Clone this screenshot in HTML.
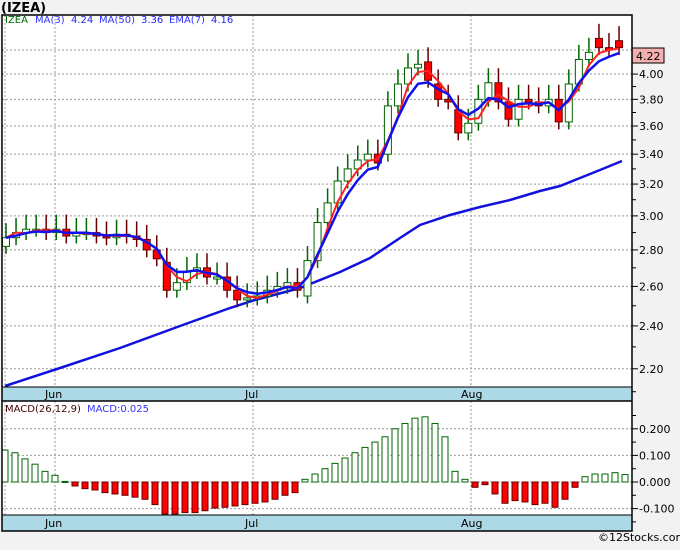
<!DOCTYPE html><html><head><style>
body{margin:0;width:680px;height:546px;background:#f2f2f2;overflow:hidden;font-family:"DejaVu Sans","Liberation Sans",sans-serif}
svg text{font-family:"DejaVu Sans","Liberation Sans",sans-serif;font-size:11px}
</style></head><body>
<svg id="s" width="680" height="546" xmlns="http://www.w3.org/2000/svg">
<rect x="2" y="15" width="630" height="516" fill="#fff"/>
<text x="1" y="12" font-weight="bold" font-size="13" style="font-size:13px">(IZEA)</text>
<rect x="2" y="387" width="630" height="14" fill="#add8e6"/>
<rect x="2" y="515" width="630" height="16" fill="#add8e6"/>
<g id="g"></g>
<rect x="2" y="15" width="630" height="516" fill="none" stroke="#000" stroke-width="1.5"/>
<line x1="2" y1="387" x2="632" y2="387" stroke="#000"/>
<line x1="2" y1="401" x2="632" y2="401" stroke="#000" stroke-width="1.5"/>
<line x1="2" y1="515" x2="632" y2="515" stroke="#000"/>
<text x="45" y="398">Jun</text><text x="245" y="398">Jul</text><text x="461" y="398">Aug</text>
<text x="45" y="527">Jun</text><text x="245" y="527">Jul</text><text x="461" y="527">Aug</text>
<text x="5" y="23" style="font-size:10px" fill="#060"><tspan>IZEA</tspan><tspan fill="#33f" x="35">MA(3)</tspan><tspan fill="#22e" x="71">4.24</tspan><tspan fill="#33f" x="99">MA(50)</tspan><tspan fill="#22e" x="141">3.36</tspan><tspan fill="#33f" x="169">EMA(7)</tspan><tspan fill="#22e" x="211">4.16</tspan></text>
<text x="5" y="412" style="font-size:10px" fill="#400"><tspan>MACD(26,12,9)</tspan><tspan fill="#33f" x="87">MACD:0.025</tspan></text>
<text x="598" y="541" style="font-size:11px">©12Stocks.com</text>
</svg>
<script>
var g=document.getElementById('g'),h='';
function Y(p){return 757.5-493*Math.log(p)}
function M(v){return 482-v*266}
[4.2,4,3.8,3.6,3.4,3.2,3,2.8,2.6,2.4,2.2].forEach(function(p){var y=Y(p);h+='<line x1="2" x2="632" y1="'+y+'" y2="'+y+'" stroke="#999" stroke-dasharray="2,2"/><line x1="632" x2="638" y1="'+y+'" y2="'+y+'" stroke="#000"/>';if(p!=4.2)h+='<text x="639" y="'+(y+4)+'">'+p.toFixed(2)+'</text>';});
[4.1,3.9,3.7,3.5,3.3,3.1,2.9,2.7,2.5,2.3,2.1].forEach(function(p){var y=Y(p);h+='<line x1="632" x2="636" y1="'+y+'" y2="'+y+'" stroke="#000"/>'});
[[0.2,'0.200'],[0.1,'0.100'],[0,'0.000'],[-0.1,'-0.100']].forEach(function(a){var y=M(a[0]);h+='<line x1="2" x2="632" y1="'+y+'" y2="'+y+'" stroke="#999" stroke-dasharray="2,2"/><line x1="632" x2="638" y1="'+y+'" y2="'+y+'" stroke="#000"/><text x="639" y="'+(y+4)+'">'+(a[0]>=0?' ':'')+a[1]+'</text>';});
[0.25,0.15,0.05,-0.05,-0.15].forEach(function(v){var y=M(v);h+='<line x1="632" x2="636" y1="'+y+'" y2="'+y+'" stroke="#000"/>'});
[5,55,253,471].forEach(function(x){h+='<line x1="'+x+'" x2="'+x+'" y1="15" y2="387" stroke="#999" stroke-dasharray="2,2"/><line x1="'+x+'" x2="'+x+'" y1="401" y2="515" stroke="#999" stroke-dasharray="2,2"/>'});
h+='<polyline fill="none" stroke="#11d" stroke-width="2.5" points="5,386 60,368 120,348 180,326 230,308 255,300 300,288 340,272 370,258 400,238 420,225 450,215 480,207 510,200 540,191 560,186 580,178 600,170 622,161"/>';
var C=[2.87,2.9,2.92,2.92,2.9,2.92,2.88,2.9,2.9,2.88,2.87,2.89,2.88,2.86,2.8,2.75,2.58,2.62,2.68,2.7,2.65,2.65,2.58,2.53,2.54,2.55,2.58,2.6,2.62,2.58,2.74,2.96,3.08,3.22,3.3,3.36,3.4,3.34,3.75,3.92,4.05,4.08,3.95,3.8,3.78,3.55,3.62,3.8,3.93,3.78,3.65,3.8,3.78,3.75,3.8,3.63,3.92,4.12,4.18,4.22,4.2,4.22];
var O=[2.82];for(var i=1;i<C.length;i++)O.push(C[i-1]);
O[16]=2.73;O[30]=2.55;O[38]=3.4;O[45]=3.72;O[55]=3.8;O[59]=4.3;O[61]=4.28;O[42]=4.1;O[43]=3.92;O[37]=3.4;
var ma=[],em=[],e=C[0];
for(var i=0;i<C.length;i++){var x=6+10.05*i;var a=i<2?C[i]:(C[i]+C[i-1]+C[i-2])/3;ma.push(x+','+Y(a));e=i?e+(C[i]-e)*0.4:e;em.push(x+','+Y(e));
var up=C[i]>=O[i],t=Y(Math.max(C[i],O[i])),b=Y(Math.min(C[i],O[i]));if(b-t<2)b=t+2;
var hi=Math.max(C[i],O[i])*1.03,lo=Math.min(C[i],O[i])*0.985;
h+='<line x1="'+x+'" x2="'+x+'" y1="'+Y(hi)+'" y2="'+Y(lo)+'" stroke="'+(up?'#060':'#600')+'" stroke-width="1.5"/><rect x="'+(x-3.5)+'" y="'+t+'" width="7" height="'+(b-t)+'" fill="'+(up?'#fff':'#f00')+'" stroke="'+(up?'#060':'#600')+'"/>';}
h+='<polyline fill="none" stroke="#f22" stroke-width="2" points="'+ma.join(' ')+'"/>';
h+='<polyline fill="none" stroke="#11e" stroke-width="2.5" points="'+em.join(' ')+'"/>';
var V=[0.12,0.11,0.087,0.067,0.04,0.025,0.002,-0.015,-0.025,-0.03,-0.04,-0.045,-0.05,-0.057,-0.065,-0.085,-0.12,-0.12,-0.115,-0.115,-0.108,-0.098,-0.095,-0.09,-0.085,-0.08,-0.075,-0.065,-0.05,-0.04,0.01,0.03,0.05,0.07,0.09,0.11,0.13,0.15,0.17,0.2,0.22,0.24,0.245,0.22,0.17,0.04,0.01,-0.02,-0.01,-0.045,-0.08,-0.07,-0.075,-0.085,-0.08,-0.095,-0.065,-0.02,0.02,0.03,0.03,0.035,0.028];
for(var i=0;i<V.length;i++){var x=5+10.0*i,v=V[i],y0=M(0),y1=M(v);h+='<rect x="'+(x-3)+'" y="'+Math.min(y0,y1)+'" width="6" height="'+Math.max(1,Math.abs(y1-y0))+'" fill="'+(v>=0?'#fff':'#f00')+'" stroke="'+(v>=0?'#060':'#600')+'"/>';}
h+='<rect x="632" y="48" width="32" height="15" fill="#f4b0b0" stroke="#000"/><text x="636" y="60">4.22</text>';
g.innerHTML=h;
</script></body></html>
